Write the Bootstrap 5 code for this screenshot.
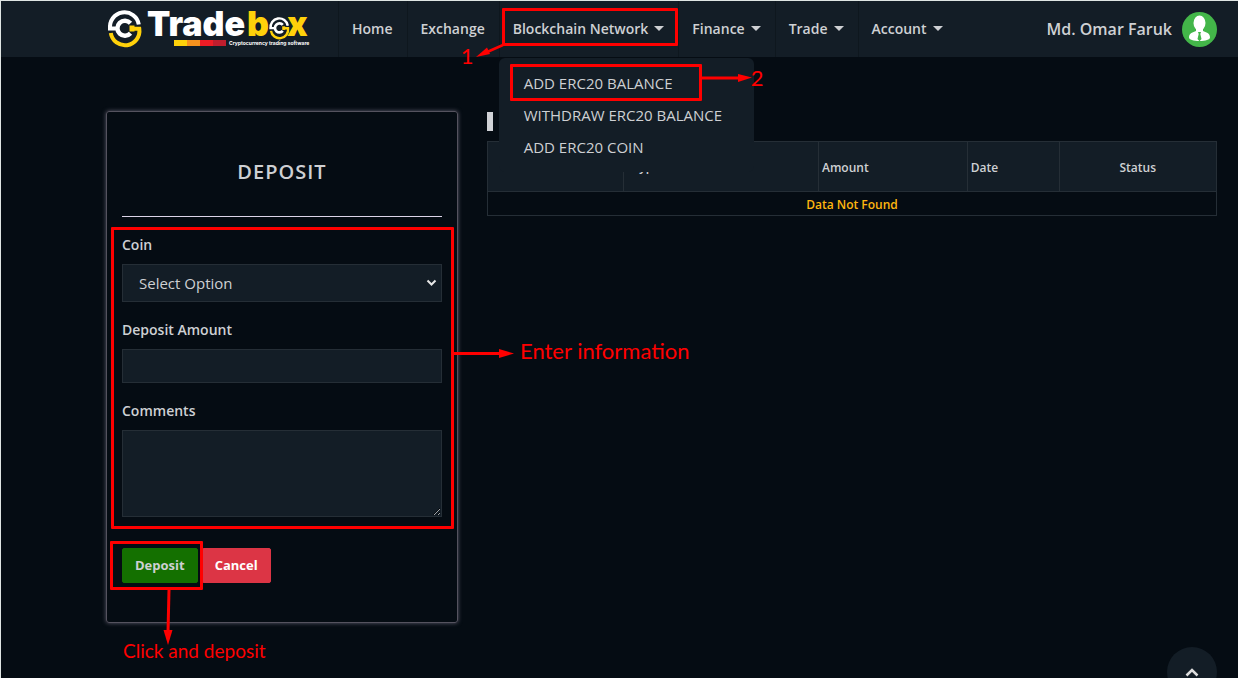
<!DOCTYPE html>
<html lang="en">
<head>
<meta charset="utf-8">
<meta name="viewport" content="width=device-width, initial-scale=1">
<title>Tradebox - Deposit</title>
<link href="https://cdn.jsdelivr.net/npm/bootstrap@5.3.0/dist/css/bootstrap.min.css" rel="stylesheet">
<style>
  :root { --page: #050c13; --panel: #131d26; --line: #252e36; --ink: #ced0d3; --note: #ff0000; }
  body { background: var(--page); color: var(--ink); font-family: "Open Sans", "Noto Sans", sans-serif; font-size: 15px; line-height: 24px; border-top: 1px solid #dfe5e3; border-left: 1px solid #dfe5e3; min-height: 100vh; }
  .topbar { background: var(--panel); height: 56px; padding: 0 21px 0 107px; }
  .brand-logo { width: 201px; height: 38px; overflow: visible; }
  .main-menu { margin-left: 29px; }
  .main-menu > li { border-left: 1px solid #0e171e; }
  .main-menu > li > .nav-link { height: 56px; padding: 0 14px 1px 13px; color: var(--ink); font-size: 14px; font-weight: 600; }
  .main-menu .dropdown-toggle::after { margin-left: 6px; border-top-width: 5px; border-right-width: 5px; border-left-width: 5px; }
  .user-name { font-size: 16px; font-weight: 600; color: var(--ink); gap: 10px; }
  .menu-panel { --bs-dropdown-bg: var(--panel); --bs-dropdown-link-color: var(--ink); --bs-dropdown-border-width: 0; --bs-dropdown-padding-y: 9px; --bs-dropdown-font-size: 15px; top: 57px; left: -1px; width: 255px; }
  .menu-panel .dropdown-item { padding: 4px 25px; height: 32px; text-transform: uppercase; }
  .content { padding: 54px 21px 54px 105px; gap: 29px; }
  .deposit-panel { width: 352px; padding: 46px 15px 39px; border: 1px solid #55535f; border-radius: 3px; box-shadow: 0 0 4px #5d5a6b; }
  .deposit-panel h1 { font-size: 20px; line-height: 28px; font-weight: 600; letter-spacing: 1px; margin-bottom: 30px; }
  .deposit-panel hr { border-color: #dcd4e8; opacity: 1; margin: 0 0 16px; }
  .deposit-panel label { font-weight: 600; font-size: 14px; display: block; margin-bottom: 7px; }
  .deposit-panel .form-control, .deposit-panel .form-select { background-color: var(--panel); border: 1px solid var(--line); border-radius: 0; color: var(--ink); }
  .deposit-panel .form-select { height: 38px; padding: 0 32px 0 16px; font-size: 15px; background-position: right 4px center; background-size: 11px 8px;
    background-image: url("data:image/svg+xml,%3Csvg xmlns='http://www.w3.org/2000/svg' viewBox='0 0 11 8'%3E%3Cpath fill='none' stroke='%23e6e6e6' stroke-width='2' d='M1.5 1.5l4 4 4-4'/%3E%3C/svg%3E"); }
  .amount-box { height: 34px; }
  .comment-box { height: 87px; }
  .fields { margin-bottom: 31px; }
  .deposit-panel .btn { --bs-btn-border-radius: 2px; --bs-btn-padding-x: 12px; --bs-btn-padding-y: 0; height: 35px; font-size: 13px; font-weight: 700; }
  .btn-deposit { --bs-btn-bg: #147000; --bs-btn-border-color: #147000; --bs-btn-color: #ced0d3; }
  .title-mark { width: 6px; height: 19px; margin: 1px 0 10px; background: #d0d2d6; }
  .history th, .history td { border: 1px solid var(--line); font-size: 12px; line-height: 18px; font-weight: 600; padding: 5px 3px 3px; }
  .history { table-layout: fixed; border-collapse: collapse; width: 100%; }
  .history th { background: var(--panel); height: 50px; vertical-align: middle; }
  .history td { color: #ffb60f; height: 24px; padding: 4px 0 1px; }
  .history .type-head { padding: 3px 3px 3px 9px; }
  .up-btn { width: 50px; height: 50px; right: 21px; bottom: -19px; background: var(--panel); }
  /* tutorial call-outs, each anchored to the thing it explains */
  .note-frame { position: absolute; border: 3px solid var(--note); border-radius: 1px; pointer-events: none; z-index: 1100; }
  .note-arrow { position: absolute; overflow: visible; pointer-events: none; z-index: 1100; }
  .note-text { position: absolute; color: var(--note); font-family: Lato, "Open Sans", sans-serif; font-size: 22px; line-height: 24px; white-space: nowrap; z-index: 1100; }
  .frame-nav { inset: 7px 0 11px 2px; }
  .arrow-nav { left: -24px; top: 43px; }
  .text-nav { left: -39px; top: 43px; }
  .frame-item { inset: -3px 52px -2px 11px; }
  .arrow-item { left: 203px; top: 7px; }
  .text-item { left: 252px; top: -1px; }
  .frame-fields { inset: -6px -12px -12px -11px; }
  .arrow-fields { left: 329px; top: 116px; }
  .text-fields { left: 398px; top: 106px; }
  .frame-submit { inset: -7px -5px -7px -12px; }
  .arrow-submit { left: 40px; top: 42px; }
  .text-submit { left: 1px; top: 91px; font-size: 19px; }
</style>
</head>
<body>
<header class="topbar d-flex align-items-center">
  <a href="#" class="d-flex" aria-label="Tradebox">
    <svg class="brand-logo" viewBox="108 10 201 38">
      <defs>
        <g id="mark" fill="none" stroke-width="4">
          <path stroke="#fff" d="M108 28.5H117M110.200 29A14.400 14.400 0 0 1 138.800 24.500"/>
          <path stroke="#fff" stroke-width="4.500" d="M130.500 23.200A7.500 7.500 0 1 0 130.500 33.200"/>
          <path stroke="#ffd10a" d="M110.800 33A14.400 14.400 0 0 0 139.300 28.800H131"/>
          <path stroke="#ffd10a" stroke-width="6" d="M129.500 28.500h5"/>
        </g>
      </defs>
      <use href="#mark"/>
      <g font-family="Inter, sans-serif" font-weight="900" font-size="34">
        <text x="147" y="36" fill="#fff">Trade</text>
        <text x="247" y="36" fill="#ffd10a">b</text>
        <text x="287" y="36" fill="#ffd10a">x</text>
      </g>
      <use href="#mark" transform="translate(204.500 11) scale(.6)"/>
      <path fill="#fdd10a" d="M174 40h13v6h-13z"/><path fill="#f6921e" d="M187 40h13v6h-13z"/>
      <path fill="#ee1c25" d="M200 40h13v6h-13z"/><path fill="#bf1e2e" d="M213 40h13v6h-13z"/>
      <text x="229" y="45" fill="#fff" font-family="Inter, sans-serif" font-weight="700" font-size="5">Cryptocurrency trading software</text>
    </svg>
  </a>
  <ul class="main-menu nav flex-nowrap">
    <li><a class="nav-link d-flex align-items-center" href="#">Home</a></li>
    <li><a class="nav-link d-flex align-items-center" href="#">Exchange</a></li>
    <li class="position-relative">
      <a class="nav-link dropdown-toggle d-flex align-items-center" href="#">Blockchain Network</a>
      <span class="note-frame frame-nav"></span>
      <svg class="note-arrow arrow-nav" width="28" height="14"><path d="M27 1L10 8.500" stroke="#f00" stroke-width="2.500"/><path d="M0 13L11 3.500 14 10z" fill="#f00"/></svg>
      <span class="note-text text-nav">1</span>
      <ul class="dropdown-menu menu-panel show">
        <li class="position-relative"><a class="dropdown-item" href="#">Add ERC20 Balance</a>
          <span class="note-frame frame-item"></span>
          <svg class="note-arrow arrow-item" width="50" height="8"><path d="M0 4H40" stroke="#f00" stroke-width="3"/><path d="M36 0L50 3.500 36 8z" fill="#f00"/></svg>
          <span class="note-text text-item">2</span>
        </li>
        <li><a class="dropdown-item" href="#">Withdraw ERC20 Balance</a></li>
        <li><a class="dropdown-item" href="#">Add ERC20 Coin</a></li>
      </ul>
    </li>
    <li><a class="nav-link dropdown-toggle d-flex align-items-center" href="#">Finance</a></li>
    <li><a class="nav-link dropdown-toggle d-flex align-items-center" href="#">Trade</a></li>
    <li><a class="nav-link dropdown-toggle d-flex align-items-center" href="#">Account</a></li>
  </ul>
  <a href="#" class="user-name d-flex align-items-center text-decoration-none ms-auto text-nowrap">Md. Omar Faruk
    <svg width="35" height="35" viewBox="0 0 35 35">
      <circle cx="17.500" cy="17.500" r="17.500" fill="#43b649"/>
      <ellipse cx="17.500" cy="11" rx="6" ry="7.500" fill="#fff"/>
      <path fill="#fff" d="M14 15h7v4c3 1.200 7 2 7 6.500 0 2-4.500 3.500-10.500 3.500S7 27.500 7 25.500C7 21 11 20.200 14 19z"/>
      <path fill="#43b649" d="M16 20h3l-.7 2 1.200 5-2 2.200-2-2.200 1.200-5z"/>
    </svg>
  </a>
</header>

<main class="content d-flex align-items-start">
  <form class="deposit-panel flex-shrink-0">
    <h1 class="text-center text-uppercase">Deposit</h1>
    <hr>
    <div class="fields position-relative">
      <div class="mb-3">
        <label for="coin">Coin</label>
        <select id="coin" class="form-select"><option>Select Option</option></select>
      </div>
      <div class="mb-3">
        <label for="amount">Deposit Amount</label>
        <input id="amount" type="text" class="form-control amount-box">
      </div>
      <label for="comments">Comments</label>
      <textarea id="comments" class="form-control comment-box"></textarea>
      <span class="note-frame frame-fields"></span>
      <svg class="note-arrow arrow-fields" width="63" height="9"><path d="M0 4.500H50" stroke="#f00" stroke-width="3"/><path d="M48 0L63 4.500 48 9z" fill="#f00"/></svg>
      <span class="note-text text-fields">Enter information</span>
    </div>
    <div class="d-flex gap-1">
      <div class="position-relative">
        <button type="button" class="btn btn-deposit">Deposit</button>
        <span class="note-frame frame-submit"></span>
        <svg class="note-arrow arrow-submit" width="12" height="55"><path d="M7 0L6 42" stroke="#f00" stroke-width="3"/><path d="M1.500 40h9L6 55z" fill="#f00"/></svg>
        <span class="note-text text-submit">Click and deposit</span>
      </div>
      <button type="reset" class="btn btn-danger">Cancel</button>
    </div>
  </form>
  <section class="flex-grow-1">
    <div class="title-mark"></div>
    <table class="history">
      <colgroup><col style="width:18.6%"><col style="width:26.8%"><col style="width:20.4%"><col style="width:12.6%"><col></colgroup>
      <thead><tr><th></th><th class="type-head">Type</th><th>Amount</th><th>Date</th><th class="text-center">Status</th></tr></thead>
      <tbody><tr><td colspan="5" class="text-center">Data Not Found</td></tr></tbody>
    </table>
  </section>
</main>
<button type="button" class="up-btn btn rounded-circle border-0 p-0 position-fixed d-flex align-items-center justify-content-center" aria-label="Back to top">
  <svg width="14" height="9" viewBox="0 0 14 9"><path d="M1.500 7.500L7 2l5.500 5.500" fill="none" stroke="#ddd" stroke-width="2.500"/></svg>
</button>
<script src="https://cdn.jsdelivr.net/npm/bootstrap@5.3.0/dist/js/bootstrap.bundle.min.js"></script>
</body>
</html>
